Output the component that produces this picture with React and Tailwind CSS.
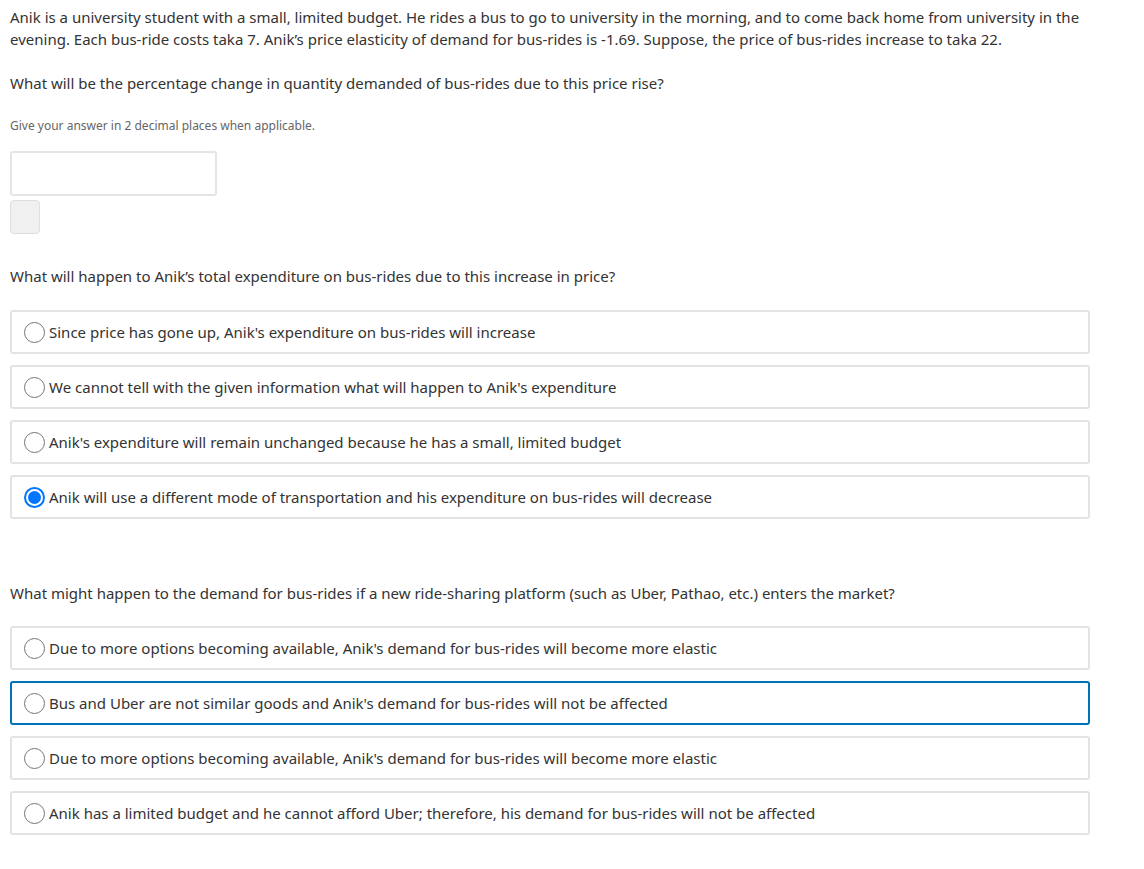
import React from "react";

function Radio({ checked }) {
  if (checked) {
    return (
      <span className="w-[21px] h-[21px] rounded-full border-2 border-[#0075ff] bg-white flex items-center justify-center shrink-0">
        <span className="w-[13px] h-[13px] rounded-full bg-[#0075ff]" />
      </span>
    );
  }
  return <span className="w-[21px] h-[21px] rounded-full border border-[#767676] bg-white shrink-0" />;
}

function Option({ text, checked, focused }) {
  return (
    <div
      className={
        "h-[44px] rounded-[3px] border-2 flex items-center pl-[12px] gap-[4px] " +
        (focused ? "border-[#0073b7]" : "border-[#e3e3e3]")
      }
    >
      <Radio checked={checked} />
      <span className="text-[15px] text-[#333]">{text}</span>
    </div>
  );
}

export default function App() {
  const group1 = [
    "Since price has gone up, Anik's expenditure on bus-rides will increase",
    "We cannot tell with the given information what will happen to Anik's expenditure",
    "Anik's expenditure will remain unchanged because he has a small, limited budget",
    "Anik will use a different mode of transportation and his expenditure on bus-rides will decrease",
  ];
  const group2 = [
    "Due to more options becoming available, Anik's demand for bus-rides will become more elastic",
    "Bus and Uber are not similar goods and Anik's demand for bus-rides will not be affected",
    "Due to more options becoming available, Anik's demand for bus-rides will become more elastic",
    "Anik has a limited budget and he cannot afford Uber; therefore, his demand for bus-rides will not be affected",
  ];
  return (
    <div
      className="bg-white w-[1144px] min-h-[869px] pl-[10px] pt-[6px] text-[#333]"
      style={{ fontFamily: '"Segoe UI", "Noto Sans", "Open Sans", sans-serif' }}
    >
      <div className="w-[1080px]">
        <p className="text-[15px] leading-[22px]">
          Anik is a university student with a small, limited budget. He rides a bus to go to university in the morning, and to come back home from university in the evening. Each bus-ride costs taka 7. Anik’s price elasticity of demand for bus-rides is -1.69. Suppose, the price of bus-rides increase to taka 22.
        </p>
        <p className="text-[15px] leading-[22px] mt-[22px]">
          What will be the percentage change in quantity demanded of bus-rides due to this price rise?
        </p>
        <p className="text-[12px] leading-[18px] mt-[23px] text-[#666]">
          Give your answer in 2 decimal places when applicable.
        </p>
        <div className="mt-[16px] w-[207px] h-[45px] border-2 border-[#e5e5e5] rounded-[3px] bg-white" />
        <div className="mt-[4px] w-[30px] h-[34px] border border-[#dedede] rounded-[4px] bg-[#f0f0f0]" />
        <p className="text-[15px] leading-[22px] mt-[31px]">
          What will happen to Anik’s total expenditure on bus-rides due to this increase in price?
        </p>
        <div className="mt-[23px] flex flex-col gap-[11px]">
          {group1.map((t, i) => (
            <Option key={i} text={t} checked={i === 3} />
          ))}
        </div>
        <p className="text-[15px] leading-[22px] mt-[63px]">
          What might happen to the demand for bus-rides if a new ride-sharing platform (such as Uber, Pathao, etc.) enters the market?
        </p>
        <div className="mt-[22px] flex flex-col gap-[11px]">
          {group2.map((t, i) => (
            <Option key={i} text={t} focused={i === 1} />
          ))}
        </div>
      </div>
    </div>
  );
}
